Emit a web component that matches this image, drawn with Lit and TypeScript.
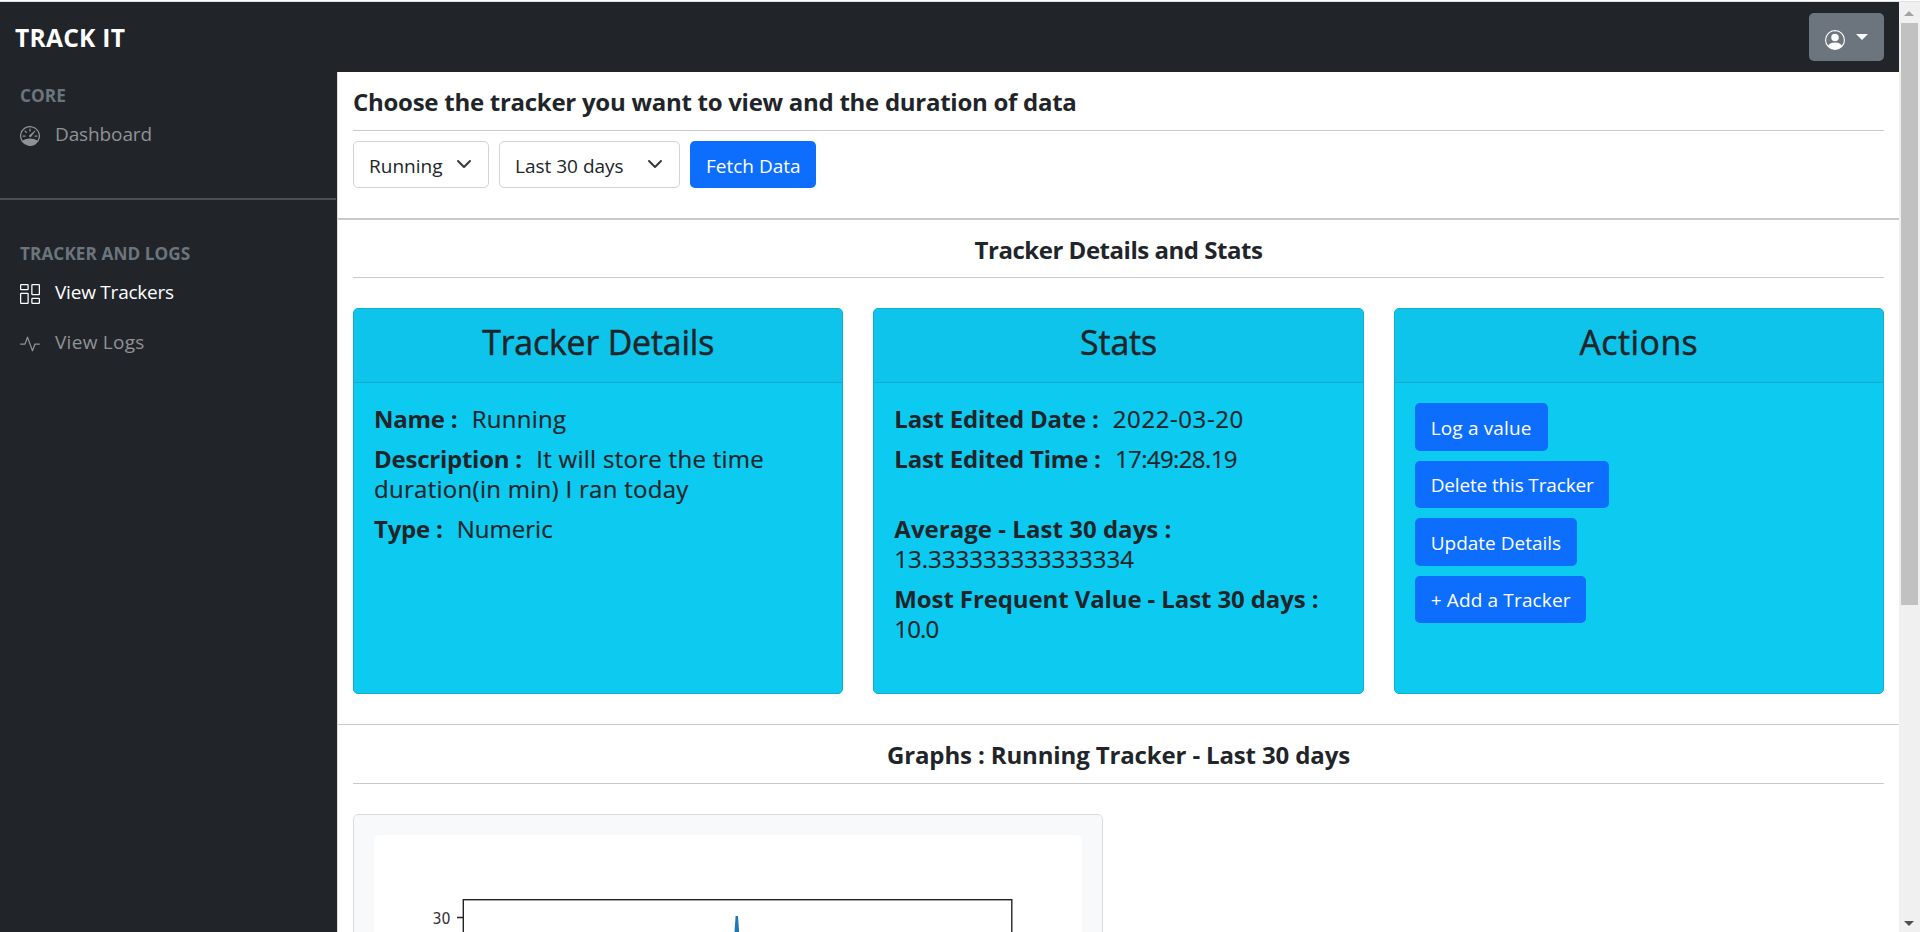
import { LitElement, html, css, svg } from "lit";
import { customElement } from "lit/decorators.js";

const icons = {
  speedometer: svg`<path d="M8 2a.5.5 0 0 1 .5.5V4a.5.5 0 0 1-1 0V2.5A.5.5 0 0 1 8 2zM3.732 3.732a.5.5 0 0 1 .707 0l.915.914a.5.5 0 1 1-.708.708l-.914-.915a.5.5 0 0 1 0-.707zM2 8a.5.5 0 0 1 .5-.5h1.586a.5.5 0 0 1 0 1H2.5A.5.5 0 0 1 2 8zm9.5 0a.5.5 0 0 1 .5-.5h1.5a.5.5 0 0 1 0 1H12a.5.5 0 0 1-.5-.5zm.754-4.246a.389.389 0 0 0-.527-.02L7.547 7.31A.91.91 0 1 0 8.85 8.569l3.434-4.297a.389.389 0 0 0-.029-.518z"/><path fill-rule="evenodd" d="M6.664 15.889A8 8 0 1 1 9.336.11a8 8 0 0 1-2.672 15.78zm-4.665-4.283A11.945 11.945 0 0 1 8 10c2.186 0 4.236.585 6.001 1.606a7 7 0 1 0-12.002 0z"/>`,
  columns: svg`<path d="M6 1v3H1V1h5zM1 0a1 1 0 0 0-1 1v3a1 1 0 0 0 1 1h5a1 1 0 0 0 1-1V1a1 1 0 0 0-1-1H1zm14 12v3h-5v-3h5zm-5-1a1 1 0 0 0-1 1v3a1 1 0 0 0 1 1h5a1 1 0 0 0 1-1v-3a1 1 0 0 0-1-1h-5zM6 8v7H1V8h5zM1 7a1 1 0 0 0-1 1v7a1 1 0 0 0 1 1h5a1 1 0 0 0 1-1V8a1 1 0 0 0-1-1H1zm14-6v7h-5V1h5zm-5-1a1 1 0 0 0-1 1v7a1 1 0 0 0 1 1h5a1 1 0 0 0 1-1V1a1 1 0 0 0-1-1h-5z"/>`,
  activity: svg`<path fill-rule="evenodd" d="M6 2a.5.5 0 0 1 .47.33L10 12.036l1.53-4.208A.5.5 0 0 1 12 7.5h3.5a.5.5 0 0 1 0 1h-3.15l-1.88 5.17a.5.5 0 0 1-.94 0L6 3.964 4.47 8.171A.5.5 0 0 1 4 8.5H.5a.5.5 0 0 1 0-1h3.15l1.88-5.17A.5.5 0 0 1 6 2Z"/>`,
  person: svg`<path d="M11 6a3 3 0 1 1-6 0 3 3 0 0 1 6 0z"/><path fill-rule="evenodd" d="M0 8a8 8 0 1 1 16 0A8 8 0 0 1 0 8zm8-7a7 7 0 0 0-5.468 11.37C3.242 11.226 4.805 10 8 10s4.757 1.225 5.468 2.37A7 7 0 0 0 8 1z"/>`,
};

const icon = (name: keyof typeof icons) =>
  html`<svg class="icon" viewBox="0 0 16 16" fill="currentColor">${icons[name]}</svg>`;

const chevron = html`<svg class="chevron" viewBox="0 0 16 16" fill="none" stroke="#343a40" stroke-width="2" stroke-linecap="round" stroke-linejoin="round"><path d="m2 5 6 6 6-6"/></svg>`;

@customElement("app-root")
export class AppRoot extends LitElement {
  static styles = css`
    :host {
      display: flex;
      flex-direction: column;
      box-sizing: border-box;
      height: 932px;
      overflow: hidden;
      padding-top: 1px;
      background: #fff;
      color: #212529;
      font-family: "Open Sans", "Noto Sans", sans-serif;
      font-size: 19px;
      line-height: 30px;
    }
    * { box-sizing: border-box; margin: 0; }
    .topline { height: 1px; background: #dee1e6; flex: none; }
    .window { display: flex; flex: 1; min-height: 0; }
    .page { width: 1899px; display: flex; flex-direction: column; min-height: 0; }
    .navbar {
      height: 70px; flex: none; display: flex; align-items: center; justify-content: space-between;
      background: #212529; padding: 0 15px;
    }
    .brand { color: #fff; font-weight: 700; font-size: 24.6px; letter-spacing: 0.25px; padding-top: 2px; }
    .user {
      width: 75px; height: 48px; border-radius: 5px; background: #6c757d; color: #fff;
      display: flex; align-items: flex-start; padding: 17px 0 0 16px;
    }
    .caret { width: 0; height: 0; margin: 4px 0 0 11px; border: 6px solid transparent; border-top-color: #fff; border-bottom: 0; }
    .icon { width: 20px; height: 20px; display: block; flex: none; }
    .body { display: flex; flex: 1; min-height: 0; }
    .sidebar { width: 337px; flex: none; background: #212529; padding-top: 8px; }
    .label { color: #6c757d; font-weight: 700; font-size: 17.2px; line-height: 26px; letter-spacing: 0.07px; padding: 3px 20px 0; height: 32px; }
    .link { display: flex; align-items: center; gap: 15px; height: 32px; margin-top: 6px; padding-left: 20px; color: #909294; }
    .link .icon { margin-top: 4px; }
    .link.logs { margin-top: 18px; }
    .link.active { color: #fff; letter-spacing: -0.22px; }
    .dash { letter-spacing: -0.12px; }
    .rule { height: 2px; width: 336px; background: #4d5053; margin: 48px 0 38px; }
    .main { flex: 1; min-width: 0; border-left: 1px solid #d9dbdd; display: flex; flex-direction: column; overflow: hidden; }
    .section { flex: none; padding: 0 15px; }
    .choose { height: 148px; border-bottom: 2px solid #c8c9ca; padding-top: 14px; }
    .details { height: 505px; border-bottom: 1px solid #c8c9ca; padding-top: 15px; }
    .graphs { padding-top: 14px; }
    .heading { height: 45px; padding-top: 1px; font-size: 24px; font-weight: 700; line-height: 30px; white-space: nowrap; border-bottom: 1px solid #c8c9ca; }
    .choose .heading { letter-spacing: -0.27px; }
    .details .heading { height: 43px; padding-top: 0; text-align: center; letter-spacing: -0.47px; margin-bottom: 30px; }
    .graphs .heading { text-align: center; letter-spacing: -0.14px; margin-bottom: 30px; }
    .form { display: flex; gap: 10px; margin-top: 10px; }
    .select {
      height: 47px; border: 1px solid #ced4da; border-radius: 5px; display: flex; align-items: center;
      justify-content: space-between; padding: 2px 16px 0 15px;
    }
    .chevron { width: 16px; height: 16px; margin: -4px 0 0 0; }
    .tracker { width: 136px; }
    .span { width: 181px; }
    .btn {
      border: 0; border-radius: 5px; background: #0d6efd; color: #fff; font: inherit; line-height: 30px;
      height: 47.5px; padding: 2px 16px 0; white-space: nowrap; text-align: left;
    }
    .btn.fetch { width: 126px; height: 47px; }
    .cards { display: grid; grid-template-columns: repeat(3, 1fr); gap: 30px; }
    .card { height: 386px; background: #0dcaf0; border: 1px solid #12adcd; border-radius: 5px; overflow: hidden; }
    .title {
      height: 74px; border-bottom: 1px solid #12adcd; background: #0fc4ea; text-align: center;
      font-size: 33.8px; line-height: 42px; padding-top: 12px; font-weight: 500; letter-spacing: -0.15px;
      -webkit-text-stroke: 0.5px currentColor;
    }
    .title.actions { letter-spacing: 0.5px; }
    .content { padding: 20px; font-size: 24px; line-height: 30px; font-weight: 500; -webkit-text-stroke: 0.2px currentColor; }
    .content p { padding-top: 1px; height: 40px; white-space: nowrap; }
    .content p.two { height: 70px; }
    .content p.blank { height: 70px; }
    .content b { font-weight: 700; letter-spacing: -0.24px; margin-right: 8px; -webkit-text-stroke: 0; }
    .content b.avg { letter-spacing: 0.03px; }
    .content b.most { letter-spacing: -0.11px; }
    .word { letter-spacing: 0.28px; }
    .date { letter-spacing: 0.58px; }
    .time { letter-spacing: -0.61px; }
    .ten { letter-spacing: -0.87px; }
    .buttons { display: flex; flex-direction: column; align-items: flex-start; gap: 10px; padding: 20px; }
    .log { width: 133px; letter-spacing: 0.16px; }
    .delete { width: 194px; letter-spacing: -0.15px; }
    .update { width: 162px; }
    .add { width: 171px; letter-spacing: 0.15px; }
    .graph { width: 750px; height: 400px; border: 1px solid #d9dcdf; border-radius: 5px; background: #f8f9fa; padding: 20px; }
    .plot { display: block; width: 708px; height: 360px; border-radius: 5px; background: #fff; }
    .tick { font: 15px "DejaVu Sans", sans-serif; }
    .scrollbar { width: 21px; background: #f0f0f0; display: flex; flex-direction: column; align-items: center; padding: 9px 0 6px 0; }
    .up { width: 0; height: 0; border: 5px solid transparent; border-top: 0; border-bottom-color: #a3a3a3; margin-right: 1px; }
    .thumb { width: 17px; height: 582px; background: #c1c1c1; margin-top: 7px; }
    .down { width: 0; height: 0; border: 5px solid transparent; border-bottom: 0; border-top-color: #505050; margin: auto 1px 0 0; }
  `;

  render() {
    return html`
      <div class="topline"></div>
      <div class="window">
        <div class="page">
          <header class="navbar">
            <span class="brand">TRACK IT</span>
            <div class="user">${icon("person")}<i class="caret"></i></div>
          </header>
          <div class="body">
            <nav class="sidebar">
              <div class="label">CORE</div>
              <div class="link">${icon("speedometer")}<span class="dash">Dashboard</span></div>
              <div class="rule"></div>
              <div class="label">TRACKER AND LOGS</div>
              <div class="link active">${icon("columns")}<span>View Trackers</span></div>
              <div class="link logs">${icon("activity")}<span class="word">View Logs</span></div>
            </nav>
            <main class="main">
              <section class="section choose">
                <h5 class="heading">Choose the tracker you want to view and the duration of data</h5>
                <div class="form">
                  <div class="select tracker"><span>Running</span>${chevron}</div>
                  <div class="select span"><span>Last 30 days</span>${chevron}</div>
                  <button class="btn fetch">Fetch Data</button>
                </div>
              </section>
              <section class="section details">
                <h5 class="heading">Tracker Details and Stats</h5>
                <div class="cards">
                  <article class="card">
                    <h2 class="title">Tracker Details</h2>
                    <div class="content">
                      <p><b>Name :</b> <span class="word">Running</span></p>
                      <p class="two"><b>Description :</b> <span class="word">It will store the time<br />duration(in min) I ran today</span></p>
                      <p><b>Type :</b> <span>Numeric</span></p>
                    </div>
                  </article>
                  <article class="card">
                    <h2 class="title">Stats</h2>
                    <div class="content">
                      <p><b>Last Edited Date :</b> <span class="date">2022-03-20</span></p>
                      <p class="blank"><b>Last Edited Time :</b> <span class="time">17:49:28.19</span></p>
                      <p class="two"><b class="avg">Average - Last 30 days :</b><br /><span>13.333333333333334</span></p>
                      <p class="two"><b class="most">Most Frequent Value - Last 30 days :</b><br /><span class="ten">10.0</span></p>
                    </div>
                  </article>
                  <article class="card">
                    <h2 class="title actions">Actions</h2>
                    <div class="buttons">
                      <button class="btn log">Log a value</button>
                      <button class="btn delete">Delete this Tracker</button>
                      <button class="btn update">Update Details</button>
                      <button class="btn add">+ Add a Tracker</button>
                    </div>
                  </article>
                </div>
              </section>
              <section class="section graphs">
                <h5 class="heading">Graphs : Running Tracker - Last 30 days</h5>
                <div class="graph">
                  <svg class="plot" viewBox="0 0 708 360">
                    <rect x="89.3" y="64.7" width="548.5" height="400" fill="none" stroke="#222" stroke-width="1.4" />
                    <path d="M83 82.5h6" stroke="#222" stroke-width="1.4" />
                    <text class="tick" x="76.5" y="88.5" text-anchor="end" textLength="18" lengthAdjust="spacingAndGlyphs" fill="#333">30</text>
                    <path d="M361.6 81h2.4L368 140h-10.400z" fill="#1f77b4" />
                  </svg>
                </div>
              </section>
            </main>
          </div>
        </div>
        <div class="scrollbar"><i class="up"></i><i class="thumb"></i><i class="down"></i></div>
      </div>
    `;
  }
}
